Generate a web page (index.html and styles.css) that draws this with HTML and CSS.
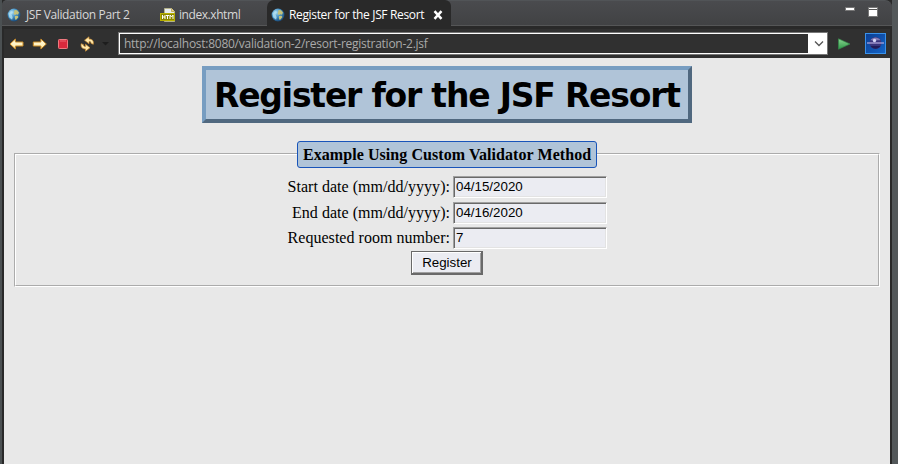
FILE: index.html
```
<!DOCTYPE html>
<html lang="en">
<head>
<meta charset="utf-8">
<title>Register for the JSF Resort</title>
<link rel="stylesheet" href="styles.css">
</head>
<body>
<svg class="defs" aria-hidden="true">
  <defs>
    <radialGradient id="sea" cx=".35" cy=".3" r=".75"><stop offset="0" stop-color="#a9dcf4"/><stop offset=".5" stop-color="#4390c4"/><stop offset="1" stop-color="#174573"/></radialGradient>
    <linearGradient id="gold" x2="0" y2="1"><stop offset="0" stop-color="#fffbe2"/><stop offset="1" stop-color="#ffeaa8"/></linearGradient>
    <linearGradient id="green" x2="0" y2="1"><stop offset="0" stop-color="#8bd391"/><stop offset="1" stop-color="#2d9a47"/></linearGradient>
    <linearGradient id="blue" x2="1" y2="1"><stop offset="0" stop-color="#0b3d91"/><stop offset="1" stop-color="#1465c8"/></linearGradient>
    <symbol id="globe" viewBox="0 0 14 14">
      <circle cx="7" cy="7" r="6.4" fill="url(#sea)"/>
      <path d="M7.500 2l2.500.2 2 2.300-1 2.200-1.500-.5-1.600.8-1.300-1.300.500-1.500zM8 8l2.500-.2 1 1.200-2 2.600-1.200.2-.5-2.500z" fill="#c4c27b"/>
      <path d="M1.500 5.400L4 3l1.800.8L4.500 6.500l1.200 2.800-.6 2.500-2.800-2.300z" fill="#b5e2f2" opacity=".8"/>
    </symbol>
  </defs>
</svg>
<div class="window">
  <header class="tabs">
    <div class="tab tab-one"><svg class="globe"><use href="#globe"/></svg><span class="label-one">JSF Validation Part 2</span></div>
    <div class="tab tab-two">
      <svg class="htm" viewBox="0 0 16 14"><path d="M4.500.5h7l3 3v10h-10z" fill="#e8edf1" stroke="#b4b38b"/><path d="M11.500.5v3h3" fill="#f4d986" stroke="#c3ae65"/><rect x=".5" y="5.500" width="14" height="7" fill="#8b8700" stroke="#b8b000"/><path d="M2.500 7v4M5 7v4M2.500 9H5M6 7.500h3M7.500 7.500V11M10 11V7l1.500 2L13 7v4" fill="none" stroke="#fff"/></svg>
      <span class="label-two">index.xhtml</span>
    </div>
    <div class="tab active"><svg class="globe"><use href="#globe"/></svg><span class="label-three">Register for the JSF Resort</span><svg class="close" viewBox="0 0 10 10"><path d="M1.500 1.200l7 7.600M8.500 1.200l-7 7.600" stroke="#fff" stroke-width="2.500"/></svg></div>
    <svg class="window-buttons" viewBox="0 0 34 12"><path d="M.5.5h9v3h-9z" fill="#fff" stroke="#777"/><path d="M23.500.5h9v9h-9z" fill="#fff" stroke="#777"/><path d="M24 2.500h8" stroke="#555"/></svg>
  </header>
  <nav class="toolbar">
    <svg class="nav-icons" viewBox="0 0 106 18">
      <path d="M1 9l5.400-5v3H14v4H6.400v3z" fill="url(#gold)" stroke="#c98a25"/>
      <path d="M37.300 9l-5.400-5v3h-7.600v4h7.600v3z" fill="url(#gold)" stroke="#c98a25"/>
      <rect x="49.500" y="4.500" width="9" height="9" rx=".8" fill="#d92a3d" stroke="#ef7a80"/><path d="M51 6h6" stroke="#e96873"/>
      <path d="M75.500 5.200L80 1.800v2.300c3.300-.2 5 2.100 4.300 5.200l-2.300-1c.1-1.200-.6-1.900-2-1.700v2.200z" fill="#ffe9ad" stroke="#c78a2f" stroke-width=".7"/>
      <path d="M81 12.800l-4.500 3.400v-2.300c-3.300.2-5-2.100-4.300-5.200l2.300 1c-.1 1.200.6 1.900 2 1.700V9.200z" fill="#ffe9ad" stroke="#c78a2f" stroke-width=".7"/>
      <path d="M93 7h7l-3.500 3.500z" fill="#1d1d1d"/>
    </svg>
    <div class="address"><span class="url">http://localhost:8080/validation-2/resort-registration-2.jsf</span><span class="drop"><svg viewBox="0 0 18 19"><path d="M7 7.500l4 4 4-4" fill="none" stroke="#555" stroke-width="1.300"/></svg></span></div>
    <svg class="go" viewBox="0 0 13 12"><path d="M.5.8L12 6 .5 11.200z" fill="url(#green)" stroke="#348a49" stroke-width=".7"/></svg>
    <svg class="planet" viewBox="0 0 21 21"><rect x=".5" y=".5" width="20" height="20" fill="url(#blue)" stroke="#3a91e8"/><circle cx="10.500" cy="10" r="6" fill="#3a347c"/><path d="M5.500 7.200a6 6 0 0 1 10 0z" fill="#817bb5"/><path d="M5.500 13a6 6 0 0 0 10 0z" fill="#211c59"/><path d="M2 10h17" stroke="#b6a9df" stroke-width="1.200"/><circle cx="9.500" cy="7.500" r="1.700" fill="#d6d5f5"/></svg>
  </nav>
  <main class="page">
    <h1><span>Register for the JSF Resort</span></h1>
    <fieldset>
      <legend><span>Example Using Custom Validator Method</span></legend>
      <form>
        <div class="row first"><label for="start">Start date (mm/dd/yyyy):</label><input id="start" value="04/15/2020"></div>
        <div class="row"><label for="end">End date (mm/dd/yyyy):</label><input id="end" value="04/16/2020"></div>
        <div class="row"><label for="room">Requested room number:</label><input id="room" value="7"></div>
        <button type="button">Register</button>
      </form>
    </fieldset>
  </main>
</div>
</body>
</html>
```
FILE: styles.css
```
* { box-sizing: border-box; }
body { margin: 0; overflow: hidden; background: #53585a; }
svg { display: block; flex: none; }
.defs { position: absolute; width: 0; height: 0; }
.window { width: 892px; height: 464px; border-left: 2px solid #4b5052; display: flex; flex-direction: column; background: #292929; }
.tabs { height: 26px; flex: none; display: flex; align-items: center; background: linear-gradient(#4a4b4e, #414244); border-top: 1px solid #515457; border-bottom: 1px solid #555657; border-radius: 5px 7px 0 0; color: #d8d8d8; font: 12px/16px "Open Sans", "Noto Sans", sans-serif; white-space: nowrap; }
.tab { display: flex; align-items: center; height: 26px; padding-top: 3px; }
.tab-one { width: 157px; padding-left: 5px; gap: 5px; }
.tab-two { width: 108px; padding-left: 1px; gap: 3px; }
.globe { width: 14px; height: 14px; }
.htm { width: 16px; height: 14px; }
.active { width: 184px; padding-left: 4px; gap: 4px; background: #292929; color: #fff; border-radius: 7px 6px 0 0; }
.label-one { letter-spacing: -.36px; }
.label-two { letter-spacing: -.43px; }
.label-three { letter-spacing: -.35px; width: 137px; }
.close { width: 10px; height: 10px; margin-left: 3px; }
.window-buttons { width: 34px; height: 12px; margin: 0 13px 0 auto; }
.toolbar { height: 32px; flex: none; border: 2px solid #292929; border-top-width: 3px; border-bottom: 0; background: #303030; display: flex; align-items: center; padding-left: 5px; }
.nav-icons { width: 106px; height: 18px; }
.address { width: 710px; height: 23px; margin-left: 3px; border: 2px solid #fff; outline: 1px solid #777; outline-offset: -1px; display: flex; background: #303030; }
.url { flex: 1; padding-left: 4px; font: 12px/19px "Open Sans", sans-serif; letter-spacing: -.26px; color: #aaa; white-space: nowrap; }
.drop { width: 18px; background: #fff; }
.drop svg { width: 18px; height: 19px; }
.go { width: 13px; height: 12px; margin-left: 10px; }
.planet { width: 21px; height: 21px; margin-left: 14px; }
.page { width: 886px; margin-left: 2px; flex: 1; background: #e8e8e8; padding: 8px 10px 0; }
h1 { width: 490px; height: 57px; margin: 0 0 18px 188px; padding-left: 8px; border: 4px solid; border-color: #779dc1 #50687f #50687f #779dc1; background: #b0c4d8; color: #000; font: bold 33px/52px "DejaVu Sans", sans-serif; letter-spacing: -1.21px; white-space: nowrap; }
fieldset { min-width: 0; width: 866px; height: 146px; margin: 0; padding: 9px 0 0; border: 2px groove #fff; }
legend { width: 300px; height: 26px; margin: 0 auto; padding: 0; }
legend span { display: block; height: 27px; padding-left: 5px; border: 1px solid #1854b9; border-radius: 3px; background: #b0c4d8; font: bold 16px/26px "Liberation Serif", serif; letter-spacing: .06px; white-space: nowrap; }
form { width: 320px; margin-left: 271px; }
.row { display: flex; height: 22px; margin-bottom: 3px; }
.first { margin-bottom: 4px; }
label { width: 163px; font: 16px/22px "Liberation Serif", serif; letter-spacing: .03px; text-align: right; white-space: nowrap; }
input { width: 154px; height: 22px; margin-left: 3px; padding: 0 2px 1px; border: 1px solid; border-color: #a0a0a0 #fff #fff #a0a0a0; box-shadow: inset 1px 1px #696969, inset -1px -1px #e3e3e3; background: #ebecf2; color: #000; font: 13.333px "Liberation Sans", sans-serif; border-radius: 0; }
button { display: block; width: 72px; height: 24px; margin: -1px 0 0 124px; padding: 0 0 1px 1px; border: 1px solid #696969; border-right-width: 2px; border-bottom-width: 2px; box-shadow: inset 1px 1px #fff, inset -1px -1px #a0a0a0; border-radius: 0; background: #ebecf2; color: #000; font: 13.333px "Liberation Sans", sans-serif; }
```
